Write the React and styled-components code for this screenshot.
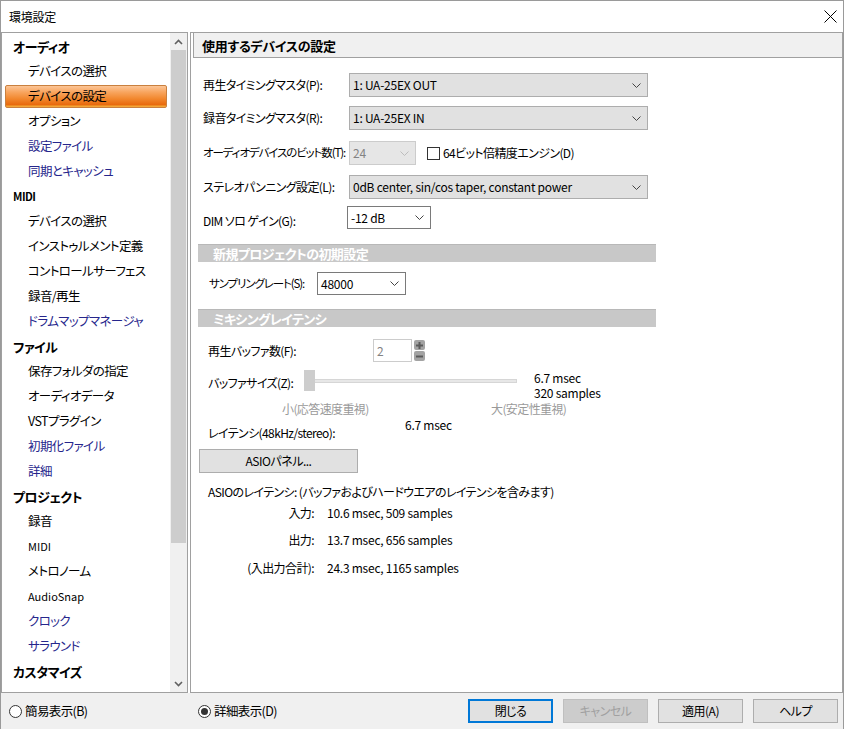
import React from 'react'
import styled, { createGlobalStyle, css } from 'styled-components'

const GlobalStyle = createGlobalStyle`
  html, body {
    margin: 0;
    padding: 0;
    background: #ffffff;
  }
  body {
    font-family: "Noto Sans CJK JP", "Noto Sans", sans-serif;
    font-size: 12px;
    color: #000000;
    font-feature-settings: "palt" 1;
    letter-spacing: -0.25px;
  }
`

const Window = styled.div`
  width: 844px;
  height: 729px;
  box-sizing: border-box;
  border: 1px solid #9a9a9a;
  border-bottom: none;
  display: flex;
  flex-direction: column;
  background: #ffffff;
  overflow: hidden;
`

const TitleBar = styled.div`
  height: 31px;
  flex: none;
  display: flex;
  align-items: center;
  justify-content: space-between;
  padding: 0 6px 0 8px;
  font-size: 12px;
  line-height: 1;
`

const Main = styled.div`
  height: 661px;
  flex: none;
  display: flex;
  gap: 2px;
`

/* ---------- sidebar ---------- */

const Sidebar = styled.div`
  width: 187px;
  flex: none;
  box-sizing: border-box;
  border: 1px solid #a0a0a0;
  display: flex;
  background: #ffffff;
`

const NavList = styled.div`
  flex: 1;
  overflow: hidden;
  padding-top: 1px;
`

const NavHead = styled.div`
  height: 25px;
  display: flex;
  align-items: center;
  padding-left: 11px;
  font-weight: 700;
  font-size: ${({ $small }) => ($small ? '11px' : '13px')};
  line-height: 1;
  letter-spacing: -0.5px;
`

const NavItem = styled.div`
  height: 25px;
  box-sizing: border-box;
  margin: 0 3px;
  padding-left: 23px;
  display: flex;
  align-items: center;
  font-size: ${({ $small }) => ($small ? '11px' : '12.5px')};
  line-height: 1;
  letter-spacing: ${({ $small }) => ($small ? '0' : '-0.6px')};
  white-space: nowrap;
  color: ${({ $blue }) => ($blue ? '#26268c' : '#000000')};

  ${({ $selected }) =>
    $selected &&
    css`
      height: 23px;
      margin: 1px 3px;
      padding-left: 22px;
      border: 1px solid #c9803f;
      border-radius: 2px;
      background: linear-gradient(
        to bottom,
        #fcc596 0%,
        #f8a45d 30%,
        #f2882f 60%,
        #e86a0d 88%,
        #f6b540 100%
      );
    `}
`

const ScrollBar = styled.div`
  width: 17px;
  flex: none;
  background: #f0f0f0;
  display: flex;
  flex-direction: column;
`

const ScrollArrow = styled.div`
  height: 17px;
  flex: none;
  display: flex;
  align-items: center;
  justify-content: center;
`

const ScrollThumb = styled.div`
  height: 493px;
  margin: 0 1px;
  background: #cdcdcd;
`

const ScrollTrack = styled.div`
  flex: 1;
`

/* ---------- right panel ---------- */

const Panel = styled.div`
  flex: 1;
  box-sizing: border-box;
  border: 1px solid #a0a0a0;
  background: #ffffff;
  display: flex;
  flex-direction: column;
`

const PanelHeader = styled.div`
  height: 24px;
  margin-left: 2px;
  border-left: 1px solid #a0a0a0;
  border-bottom: 1px solid #a0a0a0;
  background: #f0f0f0;
  display: flex;
  align-items: center;
  padding-left: 8px;
  font-weight: 700;
  font-size: 13px;
  line-height: 1;
  letter-spacing: -0.3px;
`

const Row = styled.div`
  display: flex;
  align-items: ${({ $align }) => $align || 'center'};
  height: ${({ $h }) => $h}px;
  margin-top: ${({ $top }) => $top}px;
  padding-left: ${({ $indent }) => $indent}px;
  line-height: 1;
`

const Label = styled.div`
  width: ${({ $w }) => ($w ? `${$w}px` : 'auto')};
  flex: none;
  white-space: nowrap;
  font-size: ${({ $tight }) => ($tight ? '11.5px' : '12px')};
  letter-spacing: ${({ $tight }) => ($tight ? '-1.1px' : '-0.6px')};
  text-align: ${({ $right }) => ($right ? 'right' : 'left')};
  color: ${({ $muted }) => ($muted ? '#9a9a9a' : '#000000')};
  padding-top: ${({ $drop }) => $drop || 0}px;
`

const Value = styled.div`
  flex: none;
  white-space: nowrap;
  margin-left: ${({ $shift }) => $shift || 0}px;
  padding-top: ${({ $drop }) => $drop || 0}px;
`

const selectVariants = {
  gray: css`
    background: #e1e1e1;
    border-color: #adadad;
    color: #000000;
  `,
  white: css`
    background: #ffffff;
    border-color: #7a7a7a;
    color: #000000;
  `,
  disabled: css`
    background: #e6e6e6;
    border-color: #cccccc;
    color: #838383;
  `
}

const Select = styled.div`
  width: ${({ $w }) => $w}px;
  height: 100%;
  box-sizing: border-box;
  border: 1px solid;
  ${({ $variant }) => selectVariants[$variant || 'gray']}
  display: flex;
  align-items: center;
  justify-content: space-between;
  padding: 0 6px 0 3px;
  flex: none;
  white-space: nowrap;
`

const CheckLabel = styled.label`
  display: flex;
  align-items: center;
  gap: 3px;
  margin-left: 11px;
  white-space: nowrap;
  letter-spacing: -0.6px;
`

const CheckBox = styled.span`
  width: 13px;
  height: 13px;
  box-sizing: border-box;
  border: 1px solid #333333;
  background: #ffffff;
`

const SectionBar = styled.div`
  height: 18px;
  width: 458px;
  margin-top: ${({ $top }) => $top}px;
  margin-left: 7px;
  background: #c8c8c8;
  border-top: 1px solid #b8b8b8;
  display: flex;
  align-items: center;
  padding-left: 15px;
  box-sizing: border-box;
  color: #ffffff;
  font-weight: 700;
  font-size: 13px;
  line-height: 1;
  letter-spacing: -0.6px;
`

const NumberBox = styled.div`
  width: 39px;
  height: 100%;
  box-sizing: border-box;
  border: 1px solid #cccccc;
  display: flex;
  align-items: center;
  padding-left: 3px;
  color: #838383;
`

const Spinner = styled.div`
  display: flex;
  flex-direction: column;
  gap: 1px;
  margin-left: 2px;
`

const SpinKey = styled.span`
  width: 11px;
  height: 10px;
  border-radius: 2px;
  background: #a3a3a3;
  display: flex;
  align-items: center;
  justify-content: center;
`

const Slider = styled.div`
  width: 213px;
  height: 21px;
  display: flex;
  align-items: center;
  flex: none;
`

const SliderThumb = styled.span`
  width: 11px;
  height: 21px;
  background: #cdcdcd;
  flex: none;
`

const SliderTrack = styled.span`
  flex: 1;
  height: 4px;
  box-sizing: border-box;
  background: #e7e7e7;
  border: 1px solid #d6d6d6;
  border-left: none;
`

const ValueStack = styled.div`
  display: flex;
  flex-direction: column;
  margin-left: ${({ $gap }) => $gap}px;
  line-height: 15px;
  white-space: nowrap;
`

const PushButton = styled.button`
  width: ${({ $w }) => $w}px;
  height: 24px;
  box-sizing: border-box;
  margin: 0;
  padding: 0;
  font: inherit;
  font-size: 12px;
  line-height: 1;
  letter-spacing: -0.5px;
  border: 1px solid #adadad;
  background: #e1e1e1;
  color: #000000;
  flex: none;

  ${({ $default }) =>
    $default &&
    css`
      border: 2px solid #0078d7;
    `}
  ${({ disabled }) =>
    disabled &&
    css`
      background: #cccccc;
      border-color: #bfbfbf;
      color: #a0a0a0;
    `}
`

/* ---------- footer ---------- */

const Footer = styled.div`
  flex: 1;
  background: #f0f0f0;
  display: flex;
  align-items: center;
  padding: 0 5px 0 8px;
`

const RadioLabel = styled.label`
  width: ${({ $w }) => ($w ? `${$w}px` : 'auto')};
  display: flex;
  align-items: center;
  gap: 3px;
  font-size: 12.5px;
  line-height: 1;
  letter-spacing: -0.6px;
  flex: none;
`

const RadioDot = styled.span`
  width: 13px;
  height: 13px;
  box-sizing: border-box;
  border: 1px solid #333333;
  border-radius: 50%;
  background: #ffffff;
  display: flex;
  align-items: center;
  justify-content: center;

  &::after {
    content: '';
    width: 7px;
    height: 7px;
    border-radius: 50%;
    background: ${({ $checked }) => ($checked ? '#333333' : 'transparent')};
  }
`

const ButtonGroup = styled.div`
  margin-left: auto;
  display: flex;
  gap: 10px;
`

const Chevron = ({ color = '#444444' }) => (
  <svg width="9" height="5" viewBox="0 0 9 5">
    <polyline points="0.5,0.5 4.5,4.5 8.5,0.5" fill="none" stroke={color} strokeWidth="1" />
  </svg>
)

const ScrollChevron = ({ up }) => (
  <svg width="9" height="6" viewBox="0 0 9 6">
    <polyline
      points={up ? '1,5 4.5,1.5 8,5' : '1,1 4.5,4.5 8,1'}
      fill="none"
      stroke="#606060"
      strokeWidth="1.6"
    />
  </svg>
)

const CloseIcon = () => (
  <svg width="13" height="13" viewBox="0 0 13 13">
    <path d="M0.5 0.5 L12.5 12.5 M12.5 0.5 L0.5 12.5" stroke="#000000" strokeWidth="1" />
  </svg>
)

const NAV = [
  { label: 'オーディオ', head: true },
  { label: 'デバイスの選択' },
  { label: 'デバイスの設定', selected: true },
  { label: 'オプション' },
  { label: '設定ファイル', blue: true },
  { label: '同期とキャッシュ', blue: true },
  { label: 'MIDI', head: true, small: true },
  { label: 'デバイスの選択' },
  { label: 'インストゥルメント定義' },
  { label: 'コントロールサーフェス' },
  { label: '録音/再生' },
  { label: 'ドラムマップマネージャ', blue: true },
  { label: 'ファイル', head: true },
  { label: '保存フォルダの指定' },
  { label: 'オーディオデータ' },
  { label: 'VSTプラグイン' },
  { label: '初期化ファイル', blue: true },
  { label: '詳細', blue: true },
  { label: 'プロジェクト', head: true },
  { label: '録音' },
  { label: 'MIDI', small: true },
  { label: 'メトロノーム' },
  { label: 'AudioSnap', small: true },
  { label: 'クロック', blue: true },
  { label: 'サラウンド', blue: true },
  { label: 'カスタマイズ', head: true }
]

const LATENCY = [
  { label: '入力:', value: '10.6 msec, 509 samples', top: 5 },
  { label: '出力:', value: '13.7 msec, 656 samples', top: 11 },
  { label: '(入出力合計):', value: '24.3 msec, 1165 samples', top: 12 }
]

export default function App() {
  return (
    <>
      <GlobalStyle />
      <Window>
        <TitleBar>
          <span>環境設定</span>
          <CloseIcon />
        </TitleBar>

        <Main>
          <Sidebar>
            <NavList>
              {NAV.map((item, i) =>
                item.head ? (
                  <NavHead key={i} $small={item.small}>{item.label}</NavHead>
                ) : (
                  <NavItem key={i} $blue={item.blue} $small={item.small} $selected={item.selected}>
                    {item.label}
                  </NavItem>
                )
              )}
            </NavList>
            <ScrollBar>
              <ScrollArrow><ScrollChevron up /></ScrollArrow>
              <ScrollThumb />
              <ScrollTrack />
              <ScrollArrow><ScrollChevron /></ScrollArrow>
            </ScrollBar>
          </Sidebar>

          <Panel>
            <PanelHeader>使用するデバイスの設定</PanelHeader>

            <Row $h={24} $top={15} $indent={12}>
              <Label $w={146}>再生タイミングマスタ(P):</Label>
              <Select $w={299}>
                <span>1: UA-25EX OUT</span>
                <Chevron />
              </Select>
            </Row>
            <Row $h={24} $top={9} $indent={12}>
              <Label $w={146}>録音タイミングマスタ(R):</Label>
              <Select $w={299}>
                <span>1: UA-25EX IN</span>
                <Chevron />
              </Select>
            </Row>
            <Row $h={24} $top={11} $indent={12}>
              <Label $w={146} $tight>オーディオデバイスのビット数(T):</Label>
              <Select $w={67} $variant="disabled">
                <span>24</span>
                <Chevron color="#bdbdbd" />
              </Select>
              <CheckLabel>
                <CheckBox />
                64ビット倍精度エンジン(D)
              </CheckLabel>
            </Row>
            <Row $h={24} $top={10} $indent={12}>
              <Label $w={146}>ステレオパンニング設定(L):</Label>
              <Select $w={299}>
                <span>0dB center, sin/cos taper, constant power</span>
                <Chevron />
              </Select>
            </Row>
            <Row $h={23} $top={7} $indent={12}>
              <Label $w={144} $drop={6}>DIM ソロ ゲイン(G):</Label>
              <Select $w={84} $variant="white">
                <span>-12 dB</span>
                <Chevron />
              </Select>
            </Row>

            <SectionBar $top={15}>新規プロジェクトの初期設定</SectionBar>
            <Row $h={23} $top={10} $indent={18}>
              <Label $w={108} $tight>サンプリングレート(S):</Label>
              <Select $w={89} $variant="white">
                <span>48000</span>
                <Chevron />
              </Select>
            </Row>

            <SectionBar $top={14}>ミキシングレイテンシ</SectionBar>
            <Row $h={23} $top={12} $indent={17}>
              <Label $w={165}>再生バッファ数(F):</Label>
              <NumberBox>2</NumberBox>
              <Spinner>
                <SpinKey>
                  <svg width="7" height="7" viewBox="0 0 7 7">
                    <path d="M0 3.5 H7 M3.5 0 V7" stroke="#5a5a5a" strokeWidth="2" />
                  </svg>
                </SpinKey>
                <SpinKey>
                  <svg width="7" height="7" viewBox="0 0 7 7">
                    <path d="M0 3.5 H7" stroke="#5a5a5a" strokeWidth="2" />
                  </svg>
                </SpinKey>
              </Spinner>
            </Row>
            <Row $h={30} $top={8} $indent={17} $align="flex-start">
              <Label $w={96} $drop={7}>バッファサイズ(Z):</Label>
              <Slider>
                <SliderThumb />
                <SliderTrack />
              </Slider>
              <ValueStack $gap={17}>
                <span>6.7 msec</span>
                <span>320 samples</span>
              </ValueStack>
            </Row>
            <Row $h={15} $top={1} $indent={91}>
              <Label $w={209} $muted>小(応答速度重視)</Label>
              <Label $muted>大(安定性重視)</Label>
            </Row>
            <Row $h={25} $top={1} $indent={17} $align="flex-start">
              <Label $w={197} $drop={10}>レイテンシ(48kHz/stereo):</Label>
              <Value $drop={2}>6.7 msec</Value>
            </Row>
            <Row $h={24} $top={7} $indent={8}>
              <PushButton $w={159}>ASIOパネル...</PushButton>
            </Row>

            <Row $h={16} $top={11} $indent={17}>
              <Label>ASIOのレイテンシ: (バッファおよびハードウエアのレイテンシを含みます)</Label>
            </Row>
            {LATENCY.map((l) => (
              <Row key={l.label} $h={16} $top={l.top} $indent={17}>
                <Label $w={106} $right>{l.label}</Label>
                <Value $shift={13}>{l.value}</Value>
              </Row>
            ))}
          </Panel>
        </Main>

        <Footer>
          <RadioLabel $w={189}>
            <RadioDot />
            簡易表示(B)
          </RadioLabel>
          <RadioLabel>
            <RadioDot $checked />
            詳細表示(D)
          </RadioLabel>
          <ButtonGroup>
            <PushButton $w={85} $default>閉じる</PushButton>
            <PushButton $w={85} disabled>キャンセル</PushButton>
            <PushButton $w={85}>適用(A)</PushButton>
            <PushButton $w={85}>ヘルプ</PushButton>
          </ButtonGroup>
        </Footer>
      </Window>
    </>
  )
}
